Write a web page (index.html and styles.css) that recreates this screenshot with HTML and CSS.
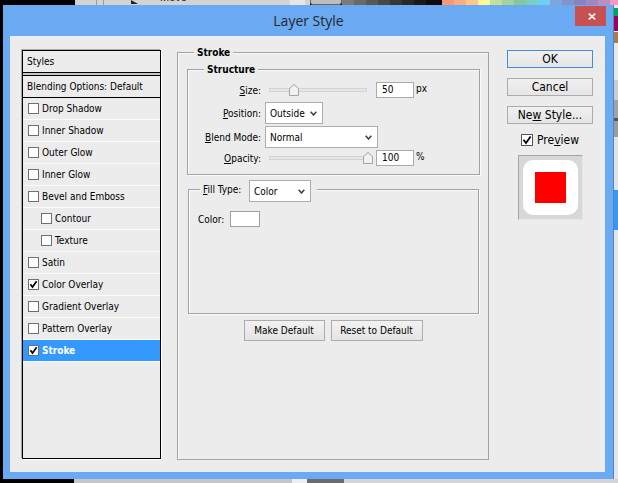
FILE: index.html
```html
<!DOCTYPE html>
<html lang="en">
<head>
<meta charset="utf-8">
<title>Layer Style</title>
<link rel="stylesheet" href="styles.css">
</head>
<body>
<div class="desk">
  <div class="strip-top">
    <div class="t-black"></div>
    <div class="t-grey t-a"></div>
    <div class="t-grey t-b"></div>
    <div class="t-grey t-c"><span class="t-icon"></span><span class="t-move">Move</span></div>
    <div class="t-arrow"></div>
    <div class="t-grey t-d"></div>
    <div class="t-box"></div>
    <div class="t-dark d1"></div><div class="t-dark d2"></div><div class="t-dark d3"></div><div class="t-dark d4"></div>
    <div class="t-dark d5"></div><div class="t-dark d6"></div><div class="t-dark d7"></div><div class="t-dark d8"></div>
    <div class="t-black2"></div>
    <div class="sw s1"></div><div class="sw s2"></div><div class="sw s3"></div><div class="sw s4"></div><div class="sw s5"></div>
    <div class="sw s6"></div><div class="sw s7"></div><div class="sw s8"></div><div class="sw s9"></div><div class="sw s10"></div>
    <div class="sw s11"></div><div class="sw s12"></div><div class="sw s13"></div><div class="sw s14"></div><div class="sw s15"></div>
  </div>

  <div class="mid">
    <div class="gap-left"></div>

    <div class="dialog">
      <div class="titlebar">
        <div></div>
        <div class="title">Layer Style</div>
        <div class="close">
          <svg width="8" height="7" viewBox="0 0 8 7"><path d="M0.8 0.6 L7.2 6.4 M7.2 0.6 L0.8 6.4" stroke="#fff" stroke-width="1.5" fill="none"/></svg>
        </div>
      </div>

      <div class="client">
        <!-- Styles list -->
        <div class="styles-panel">
          <div class="sp-head">Styles</div>
          <div class="sp-sep"></div>
          <div class="sp-blend">Blending Options: Default</div>
          <div class="sp-row"><span class="cb"></span><span>Drop Shadow</span></div>
          <div class="sp-row"><span class="cb"></span><span>Inner Shadow</span></div>
          <div class="sp-row"><span class="cb"></span><span>Outer Glow</span></div>
          <div class="sp-row"><span class="cb"></span><span>Inner Glow</span></div>
          <div class="sp-row"><span class="cb"></span><span>Bevel and Emboss</span></div>
          <div class="sp-row ind"><span class="cb"></span><span>Contour</span></div>
          <div class="sp-row ind"><span class="cb"></span><span>Texture</span></div>
          <div class="sp-row"><span class="cb"></span><span>Satin</span></div>
          <div class="sp-row"><span class="cb"><svg width="9" height="9" viewBox="0 0 9 9"><path d="M1.4 4.2 L3.5 7 L7.6 1.2" stroke="#000" stroke-width="1.7" fill="none"/></svg></span><span>Color Overlay</span></div>
          <div class="sp-row"><span class="cb"></span><span>Gradient Overlay</span></div>
          <div class="sp-row"><span class="cb"></span><span>Pattern Overlay</span></div>
          <div class="sp-row sel"><span class="cb"><svg width="9" height="9" viewBox="0 0 9 9"><path d="M1.4 4.2 L3.5 7 L7.6 1.2" stroke="#000" stroke-width="1.7" fill="none"/></svg></span><span>Stroke</span></div>
        </div>

        <!-- Centre -->
        <div class="center-col">
          <div class="group-outer">
            <div class="gtitle">Stroke</div>

            <div class="group-structure">
              <div class="gtitle">Structure</div>

              <div class="srow r-size">
                <span class="lbl"><u>S</u>ize:</span>
                <div class="slider">
                  <div class="track"></div>
                  <svg class="thumb th-size" width="10" height="12" viewBox="0 0 10 12"><path d="M0.5 4.5 L5 0.5 L9.5 4.5 L9.5 11.5 L0.5 11.5 Z" fill="#f1f1f1" stroke="#a3a3a3"/></svg>
                </div>
                <div class="num">50</div>
                <span class="unit">px</span>
              </div>

              <div class="srow r-pos">
                <span class="lbl"><u>P</u>osition:</span>
                <div class="select w-pos"><span>Outside</span><svg width="7" height="5" viewBox="0 0 7 5"><path d="M0.7 0.7 L3.5 4 L6.3 0.7" stroke="#444" stroke-width="1.6" fill="none"/></svg></div>
              </div>

              <div class="srow r-blend">
                <span class="lbl"><u>B</u>lend Mode:</span>
                <div class="select w-blend"><span>Normal</span><svg width="7" height="5" viewBox="0 0 7 5"><path d="M0.7 0.7 L3.5 4 L6.3 0.7" stroke="#444" stroke-width="1.6" fill="none"/></svg></div>
              </div>

              <div class="srow r-opa">
                <span class="lbl"><u>O</u>pacity:</span>
                <div class="slider">
                  <div class="track"></div>
                  <svg class="thumb th-opa" width="10" height="12" viewBox="0 0 10 12"><path d="M0.5 4.5 L5 0.5 L9.5 4.5 L9.5 11.5 L0.5 11.5 Z" fill="#f1f1f1" stroke="#a3a3a3"/></svg>
                </div>
                <div class="num">100</div>
                <span class="unit">%</span>
              </div>
            </div>

            <div class="group-fill">
              <div class="ftitle">
                <span class="lbl-fill"><u>F</u>ill Type:</span>
                <div class="select w-fill"><span>Color</span><svg width="7" height="5" viewBox="0 0 7 5"><path d="M0.7 0.7 L3.5 4 L6.3 0.7" stroke="#444" stroke-width="1.6" fill="none"/></svg></div>
              </div>
              <div class="color-row">
                <span class="lbl-color">Color:</span>
                <span class="swatch"></span>
              </div>
            </div>

            <div class="btn-row">
              <div class="btn w-make">Make Default</div>
              <div class="btn w-reset">Reset to Default</div>
            </div>
          </div>
        </div>

        <!-- Right -->
        <div class="rcol">
          <div class="dbtn ok">OK</div>
          <div class="dbtn">Cancel</div>
          <div class="dbtn">Ne<u>w</u> Style...</div>
          <div class="prev-row">
            <span class="cb big"><svg width="10" height="10" viewBox="0 0 10 10"><path d="M1.5 4.8 L4 8 L8.6 1.4" stroke="#000" stroke-width="1.8" fill="none"/></svg></span>
            <span>Pre<u>v</u>iew</span>
          </div>
          <div class="preview">
            <div class="pv-white"><div class="pv-red"></div></div>
          </div>
        </div>
      </div>
    </div>

    <div class="strip-right">
      <div class="r1"></div><div class="r2"></div><div class="r3"></div><div class="r4"></div>
      <div class="r5"></div><div class="r6"></div><div class="r7"></div><div class="r8"></div>
      <div class="r9"></div><div class="r10"></div><div class="r11"></div><div class="r12"></div>
      <div class="r13"></div>
    </div>
  </div>

  <div class="strip-bottom">
    <div class="b1"></div><div class="b2"></div><div class="b3"></div><div class="b4"></div><div class="b5"></div>
  </div>
</div>
</body>
</html>
```

FILE: styles.css
```css
* { box-sizing: border-box; }
html, body { margin: 0; padding: 0; }
body {
  width: 618px; height: 483px; overflow: hidden;
  background: #000;
  font-family: "DejaVu Sans Condensed", "DejaVu Sans", "Liberation Sans", sans-serif;
  font-size: 10px;
  color: #000;
}
u { text-decoration: underline; text-underline-offset: 1px; }
.desk { width: 618px; height: 483px; display: flex; flex-direction: column; }

/* ---- background strips ---- */
.strip-top { height: 5px; flex: none; display: flex; overflow: hidden; }
.strip-top > div { flex: none; height: 5px; }
.t-black { width: 75px; background: #000; }
.t-grey { background: #d3d3d3; }
.t-a { width: 22px; border-right: 1px solid #9c9c9c; }
.t-b { width: 7px; border-right: 1px solid #9c9c9c; }
.t-c { width: 186px; display: flex; overflow: hidden; }
.t-icon { width: 7px; height: 4px; margin-left: 27px; background: #222; clip-path: polygon(0 0, 100% 100%, 0 100%); }
.t-move { margin-left: 22px; margin-top: -8px; font-family: "Liberation Sans", sans-serif; font-size: 11px; line-height: 11px; color: #111; }
.t-arrow { width: 15px; background: #e6e6e6; }
.t-d { width: 5px; }
.t-box { width: 32px; background: #bdbdbd; border: 1px solid #666; border-top: none; border-radius: 0 0 3px 3px; }
.t-dark { width: 12px; }
.d1 { background: #7a7a7a; } .d2 { background: #696969; } .d3 { background: #585858; } .d4 { background: #474747; }
.d5 { background: #373737; } .d6 { background: #282828; } .d7 { background: #1a1a1a; } .d8 { background: #0d0d0d; width: 14px; }
.t-black2 { width: 2px; background: #000; }
.sw { width: 12px; }
.s1 { background: #f7977a; } .s2 { background: #f9ad81; } .s3 { background: #fdc68a; } .s4 { background: #fff79a; }
.s5 { background: #c4df9b; } .s6 { background: #a3d39c; } .s7 { background: #82ca9d; } .s8 { background: #7bcdc8; }
.s9 { background: #6ecff6; } .s10 { background: #7ea7d8; } .s11 { background: #8493ca; } .s12 { background: #8882be; }
.s13 { background: #a187be; } .s14 { background: #bc8dbf; } .s15 { background: #f49ac2; }

.mid { height: 474px; flex: none; display: flex; }
.gap-left { width: 3px; flex: none; background: #000; }

.strip-right { width: 5px; flex: none; display: flex; flex-direction: column; border-left: 1px solid #4d86c4; }
.strip-right > div { flex: none; }
.r1 { height: 3px; background: #ece4ee; }
.r2 { height: 8px; background: #00a651; }
.r3 { height: 15px; background: #9e005d; }
.r4 { height: 1px; background: #fff; }
.r5 { height: 11px; background: #a67c52; }
.r6 { height: 37px; background: #e8e8e8; }
.r7 { height: 20px; background: #cdcdcd; }
.r8 { height: 18px; background: #a3a3a3; }
.r9 { height: 3px; background: #555; }
.r10 { height: 16px; background: #9c9c9c; }
.r11 { height: 53px; background: #e3e3e3; }
.r12 { height: 40px; background: #3b96f0; }
.r13 { flex: 1 !important; background: #e6e6e6; }

.strip-bottom { height: 4px; flex: none; display: flex; }
.strip-bottom > div { flex: none; }
.b1 { width: 74px; background: #000; }
.b2 { width: 218px; background: #c6c6c6; }
.b3 { width: 15px; background: #eeeeee; }
.b4 { width: 37px; background: #6b6b6b; }
.b5 { flex: 1 !important; background: #d4d4d4; }

/* ---- dialog ---- */
.dialog {
  width: 610px; flex: none;
  background: #69aaf3;
  display: flex; flex-direction: column;
  padding: 0 8px 7px 7px;
}
.titlebar {
  height: 31px; flex: none;
  margin: 0 -8px 0 -7px;
  display: grid; grid-template-columns: 1fr auto 1fr;
}
.title {
  font-family: "Open Sans", "Noto Sans", sans-serif;
  font-size: 14px; color: #262626;
  line-height: 31px; padding-left: 1px;
}
.close {
  justify-self: end; align-self: start;
  width: 31px; height: 20px; margin: 1px 7px 0 0;
  background: #c75050;
  display: flex; align-items: center; justify-content: center;
  padding-left: 2px;
}

.client {
  flex: 1;
  background: #ececec;
  display: flex; align-items: flex-start;
  padding: 14px 12px 0 12px;
}

/* ---- styles panel ---- */
.styles-panel {
  width: 139px; height: 409px; flex: none;
  border: 1px solid #000;
  box-shadow: -1px -1px 0 #a6a6a6, 1px 1px 0 #fff;
  display: flex; flex-direction: column;
}
.sp-head { height: 22px; border-bottom: 1px solid #000; padding-left: 4px; line-height: 21px; }
.sp-sep { height: 2px; background: #c6c6c6; }
.sp-blend { height: 23px; border-top: 1px solid #000; border-bottom: 1px solid #000; padding-left: 4px; line-height: 21px; }
.sp-row {
  height: 22px; border-bottom: 1px solid #fbfbfb;
  display: flex; align-items: center; gap: 3px; padding-left: 5px;
}
.sp-row.ind { padding-left: 18px; }
.sp-row.sel { background: #3399ff; color: #fff; font-weight: bold; }
.cb {
  width: 11px; height: 11px; flex: none;
  border: 1px solid #707070; background: #fff;
  display: flex; align-items: center; justify-content: center;
}
.cb.big { width: 12px; height: 12px; border-color: #555; }

/* ---- centre ---- */
.center-col { width: 312px; flex: none; margin-left: 16px; padding-top: 2px; }
.group-outer {
  position: relative;
  width: 312px; height: 408px;
  border: 1px solid #a3a3a3;
  box-shadow: inset 1px 1px 0 #fafafa;
  padding: 16px 0 0 9px;
}
.gtitle {
  position: absolute; top: -7px; left: 16px;
  padding: 0 3px; background: #ececec;
  font-weight: bold; line-height: 13px;
}
.group-structure {
  position: relative;
  width: 293px; height: 106px;
  border: 1px solid #a3a3a3;
  box-shadow: inset 1px 1px 0 #fafafa, 1px 1px 0 #fafafa;
  padding-top: 12px;
}
.srow { display: flex; align-items: center; }
.r-size, .r-opa { height: 16px; }
.r-pos { height: 22px; margin-top: 4px; }
.r-blend { height: 22px; margin-top: 2px; }
.r-opa { margin-top: 2px; }
.lbl { width: 73px; text-align: right; margin-right: 4px; flex: none; }
.slider { position: relative; width: 107px; height: 16px; flex: none; display: flex; align-items: center; }
.track { flex: 1; height: 4px; margin: 0 5px 0 4px; background: #e6e6e6; border: 1px solid #d3d3d3; }
.thumb { position: absolute; top: 2px; }
.th-size { left: 24px; }
.th-opa { left: 98px; }
.num {
  width: 38px; height: 16px; flex: none; margin-left: 4px;
  border: 1px solid #ababab; background: #fff;
  padding-left: 5px; line-height: 14px;
}
.unit { margin-left: 2px; margin-top: -3px; }
.select {
  height: 22px; flex: none;
  border: 1px solid #adadad; background: #fff;
  display: flex; align-items: center; justify-content: space-between;
  padding: 0 5px 0 4px;
}
.w-pos { width: 58px; }
.w-blend { width: 113px; }
.w-fill { width: 62px; margin-left: 5px; }

.group-fill {
  position: relative;
  width: 291px; height: 125px;
  margin: 14px 0 0 1px;
  border: 1px solid #a3a3a3;
  box-shadow: inset 1px 1px 0 #fafafa, 1px 1px 0 #fafafa;
  padding: 21px 0 0 9px;
}
.ftitle {
  position: absolute; top: -10px; left: 11px;
  display: flex; align-items: center;
  background: #ececec; padding: 0 6px 0 3px;
}
.lbl-fill { width: 41px; margin-top: -3px; flex: none; }
.color-row { display: flex; align-items: center; height: 16px; }
.lbl-color { width: 29px; flex: none; }
.swatch { width: 30px; height: 16px; margin-left: 3px; border: 1px solid #a0a0a0; background: #fff; }

.btn-row { display: flex; justify-content: center; gap: 6px; margin: 6px 0 0 -9px; }
.btn {
  height: 21px; border: 1px solid #acacac;
  background: linear-gradient(#f2f2f2, #e4e4e4);
  display: flex; align-items: center; justify-content: center;
}
.w-make { width: 81px; }
.w-reset { width: 92px; }

/* ---- right column ---- */
.rcol { width: 86px; flex: none; margin-left: 18px; display: flex; flex-direction: column; }
.dbtn {
  height: 18px; margin-bottom: 10px;
  border: 1px solid #acacac;
  background: linear-gradient(#f0f0f0, #e5e5e5);
  font-size: 12px; line-height: 16px; text-align: center;
}
.dbtn.ok { border-color: #3c8fe3; }
.prev-row {
  display: flex; align-items: center; justify-content: center; gap: 4px;
  font-size: 12px; height: 14px; margin-top: -1px;
}
.preview {
  width: 65px; height: 65px; margin: 8px auto 0;
  background: #d8d8d8;
  border: 1px solid; border-color: #a5a5a5 #e6e6e6 #e6e6e6 #a5a5a5;
  padding: 4px;
}
.pv-white {
  width: 55px; height: 55px; border-radius: 10px; background: #fff;
  display: flex; align-items: center; justify-content: center;
}
.pv-red { width: 31px; height: 31px; background: #ff0000; }
```
